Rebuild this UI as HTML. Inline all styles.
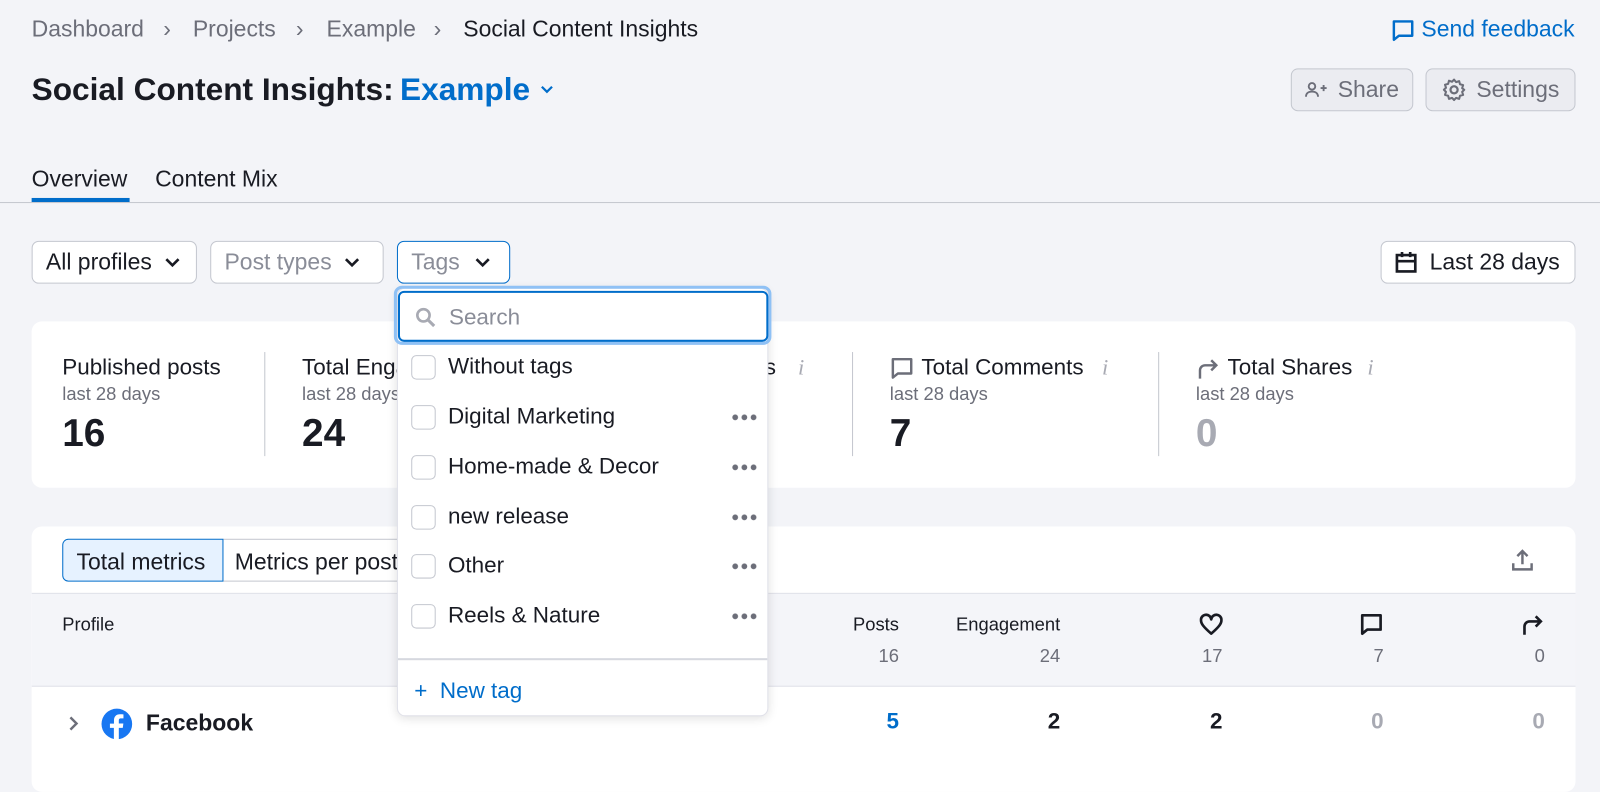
<!DOCTYPE html>
<html><head><meta charset="utf-8"><style>
*{box-sizing:border-box;margin:0;padding:0}
html,body{width:1600px;height:759px;overflow:hidden;background:#f3f4f8}
#w{position:absolute;left:0;top:0;width:1568px;height:744px;transform:scale(1.0204);transform-origin:0 0;font-family:"Liberation Sans",sans-serif;color:#191b23}
.a{position:absolute;white-space:nowrap}
.btn{position:absolute;border:1px solid #c4c7cf;border-radius:7px;background:#fff;font-size:22.5px;display:flex;align-items:center;padding:0 13px}
.gray{color:#6c6e79}
.card{position:absolute;background:#fff;border-radius:10px;left:31px;width:1513px}
.cb{position:absolute;left:13px;width:24px;height:24px;border:1.5px solid #c4c7cf;border-radius:5px}
.item{position:absolute;left:0;width:364px;height:49px;font-size:22px}
.item span{position:absolute;left:49px;top:11px}
.dots{position:absolute;right:12px;top:22px;width:26px;height:6px;background:radial-gradient(circle,#6c6e79 2.6px,transparent 3px) 0 0/9px 6px repeat-x}
.vl{position:absolute;top:345px;width:1px;height:102px;background:#c4c7cf}
.mt{font-size:22px}.ms{font-size:18px;color:#6c6e79}.mv{font-size:38px;font-weight:bold}
.f{font-size:22.5px}
.s{font-size:18px}
</style></head><body><div id="w">
<div class="a gray f" style="left:31px;top:16px">Dashboard</div>
<div class="a gray f" style="left:160px;top:16px">›</div>
<div class="a gray f" style="left:189px;top:16px">Projects</div>
<div class="a gray f" style="left:290px;top:16px">›</div>
<div class="a gray f" style="left:320px;top:16px">Example</div>
<div class="a gray f" style="left:425px;top:16px">›</div>
<div class="a f" style="left:454px;top:16px">Social Content Insights</div>
<svg class="a" style="left:1363px;top:18px" width="24" height="24" viewBox="0 0 24 24"><path d="M3 3h18v14H8l-5 4z" fill="none" stroke="#006dca" stroke-width="2.4" stroke-linejoin="round"/></svg>
<div class="a f" style="left:1393px;top:16px;color:#006dca">Send feedback</div>
<div class="a" style="left:31px;top:70px;font-size:31px;font-weight:bold">Social Content Insights:</div>
<div class="a" style="left:392px;top:70px;font-size:31px;font-weight:bold;color:#006dca">Example</div>
<svg class="a" style="left:528px;top:81px" width="16" height="14"><path d="M3 4l5 5 5-5" fill="none" stroke="#006dca" stroke-width="2.2"/></svg>
<div class="btn" style="left:1265px;top:67px;width:120px;height:42px;background:#ebecf1;color:#6c6e79;justify-content:center;gap:10px"><svg width="26" height="20" viewBox="0 0 26 20"><circle cx="8" cy="6" r="3.8" fill="none" stroke="#6c6e79" stroke-width="2.2"/><path d="M1 18c0-4 3-6 7-6s7 2 7 6" fill="none" stroke="#6c6e79" stroke-width="2.2"/><path d="M18 8h7M21.5 4.5v7" stroke="#6c6e79" stroke-width="2.2"/></svg>Share</div>
<div class="btn" style="left:1397px;top:67px;width:147px;height:42px;background:#ebecf1;color:#6c6e79;justify-content:center;gap:10px"><svg width="24" height="24" viewBox="0 0 24 24"><circle cx="12" cy="12" r="3.5" fill="none" stroke="#6c6e79" stroke-width="2.2"/><path d="M12 2l2 2.5 3-1 .8 3.1 3.1.8-1 3L22 12l-2.1 2 1 3-3.1.8-.8 3.1-3-1L12 22l-2-2.1-3 1-.8-3.1-3.1-.8 1-3L2 12l2.1-2-1-3 3.1-.8.8-3.1 3 1z" fill="none" stroke="#6c6e79" stroke-width="2" stroke-linejoin="round"/></svg>Settings</div>
<div class="a f" style="left:31px;top:163px">Overview</div>
<div class="a f" style="left:152px;top:163px">Content Mix</div>
<div class="a" style="left:31px;top:194px;width:96px;height:4px;background:#006dca"></div>
<div class="a" style="left:0;top:198px;width:1600px;height:1px;background:#c4c7cf"></div>
<div class="btn" style="left:31px;top:236px;width:162px;height:42px;gap:12px">All profiles<svg width="16" height="12"><path d="M2 3l6 6 6-6" fill="none" stroke="#191b23" stroke-width="2.6"/></svg></div>
<div class="btn" style="left:206px;top:236px;width:170px;height:42px;gap:12px;color:#8a8d98">Post types<svg width="16" height="12"><path d="M2 3l6 6 6-6" fill="none" stroke="#191b23" stroke-width="2.6"/></svg></div>
<div class="btn" style="left:389px;top:236px;width:111px;height:42px;gap:14px;color:#8a8d98;border-color:#006dca">Tags<svg width="16" height="12"><path d="M2 3l6 6 6-6" fill="none" stroke="#191b23" stroke-width="2.6"/></svg></div>
<div class="btn" style="left:1353px;top:236px;width:191px;height:42px;gap:12px"><svg width="22" height="24" viewBox="0 0 22 24"><rect x="2" y="5" width="18" height="16" fill="none" stroke="#191b23" stroke-width="2.6"/><path d="M2 11h18M7 2v5M15 2v5" stroke="#191b23" stroke-width="2.6"/></svg>Last 28 days</div>

<div class="card" style="top:315px;height:163px"></div>
<div class="a mt" style="left:61px;top:347px">Published posts</div><div class="a ms" style="left:61px;top:376px">last 28 days</div><div class="a mv" style="left:61px;top:404px">16</div>
<div class="vl" style="left:259px"></div>
<div class="a mt" style="left:296px;top:347px">Total Engagement</div><div class="a ms" style="left:296px;top:376px">last 28 days</div><div class="a mv" style="left:296px;top:404px">24</div>
<div class="a mt" style="left:610px;top:347px">Total Reactions</div>
<div class="a mt" style="left:782px;top:347px;color:#a8aab3;font-family:'Liberation Serif',serif;font-style:italic">i</div>
<div class="vl" style="left:835px"></div>
<svg class="a" style="left:872px;top:349px" width="24" height="24" viewBox="0 0 24 24"><path d="M3 3h18v14H8l-5 4z" fill="none" stroke="#6c6e79" stroke-width="2.4" stroke-linejoin="round"/></svg>
<div class="a mt" style="left:903px;top:347px">Total Comments</div>
<div class="a mt" style="left:1080px;top:347px;color:#a8aab3;font-family:'Liberation Serif',serif;font-style:italic">i</div>
<div class="a ms" style="left:872px;top:376px">last 28 days</div><div class="a mv" style="left:872px;top:404px">7</div>
<div class="vl" style="left:1135px"></div>
<svg class="a" style="left:1172px;top:349px" width="24" height="24" viewBox="0 0 24 24"><path d="M4 22V14a5 5 0 015-5h11M15 4l5 5-5 5" fill="none" stroke="#6c6e79" stroke-width="2.4"/></svg>
<div class="a mt" style="left:1203px;top:347px">Total Shares</div>
<div class="a mt" style="left:1340px;top:347px;color:#a8aab3;font-family:'Liberation Serif',serif;font-style:italic">i</div>
<div class="a ms" style="left:1172px;top:376px">last 28 days</div><div class="a mv" style="left:1172px;top:404px;color:#a8aab3">0</div>

<div class="card" style="top:516px;height:260px;overflow:hidden">
<div class="a" style="left:0;top:65px;width:1513px;height:92px;background:#f4f5f9;border-top:1px solid #e0e1e9;border-bottom:1px solid #e0e1e9"></div>
</div>
<div class="a f" style="left:61px;top:528px;width:158px;height:42px;border:1.5px solid #006dca;border-radius:6px 0 0 6px;background:#e6f2ff;padding:9px 0 0 13px">Total metrics</div>
<div class="a f" style="left:219px;top:528px;width:200px;height:42px;border:1px solid #c4c7cf;border-left:none;padding:9px 0 0 11px">Metrics per post</div>
<svg class="a" style="left:1480px;top:537px" width="24" height="24" viewBox="0 0 24 24"><path d="M12 16V3M7 8l5-5 5 5M3 15v6h18v-6" fill="none" stroke="#6c6e79" stroke-width="2.4"/></svg>
<div class="a s" style="left:61px;top:602px">Profile</div>
<div class="a s" style="left:781px;top:602px;width:100px;text-align:right">Posts</div>
<div class="a s" style="left:861px;top:602px;width:178px;text-align:right">Engagement</div>
<div class="a gray s" style="left:781px;top:633px;width:100px;text-align:right">16</div>
<div class="a gray s" style="left:881px;top:633px;width:158px;text-align:right">24</div>
<svg class="a" style="left:1174px;top:600px" width="26" height="24" viewBox="0 0 26 24"><path d="M13 21C5 14 3 11 3 8a5 5 0 0110-1 5 5 0 0110 1c0 3-2 6-10 13z" fill="none" stroke="#191b23" stroke-width="2.6" stroke-linejoin="round"/></svg>
<svg class="a" style="left:1332px;top:600px" width="24" height="24" viewBox="0 0 24 24"><path d="M3 3h18v14H8l-5 4z" fill="none" stroke="#191b23" stroke-width="2.6" stroke-linejoin="round"/></svg>
<svg class="a" style="left:1490px;top:600px" width="24" height="24" viewBox="0 0 24 24"><path d="M4 22V14a5 5 0 015-5h11M15 4l5 5-5 5" fill="none" stroke="#191b23" stroke-width="2.6"/></svg>
<div class="a gray s" style="left:1100px;top:633px;width:98px;text-align:right">17</div>
<div class="a gray s" style="left:1256px;top:633px;width:100px;text-align:right">7</div>
<div class="a gray s" style="left:1414px;top:633px;width:100px;text-align:right">0</div>
<svg class="a" style="left:65px;top:700px" width="14" height="18"><path d="M4 3l6 6-6 6" fill="none" stroke="#6c6e79" stroke-width="2.4"/></svg>
<svg class="a" style="left:99px;top:694px" width="31" height="31" viewBox="0 0 32 32"><circle cx="16" cy="16" r="15.5" fill="#1877f2"/><path d="M18 32V20h4l.6-4.5H18v-3c0-1.3.4-2.2 2.2-2.2h2.5V6.3c-.4-.1-1.9-.2-3.6-.2-3.6 0-6 2.2-6 6.2v3.3H9V20h4v12z" fill="#fff"/></svg>
<div class="a" style="left:143px;top:696px;font-size:22.5px;font-weight:bold">Facebook</div>
<div class="a" style="left:781px;top:694px;width:100px;text-align:right;font-size:22px;font-weight:bold;color:#006dca">5</div>
<div class="a" style="left:881px;top:694px;width:158px;text-align:right;font-size:22px;font-weight:bold">2</div>
<div class="a" style="left:1100px;top:694px;width:98px;text-align:right;font-size:22px;font-weight:bold">2</div>
<div class="a" style="left:1256px;top:694px;width:100px;text-align:right;font-size:22px;font-weight:bold;color:#a8aab3">0</div>
<div class="a" style="left:1414px;top:694px;width:100px;text-align:right;font-size:22px;font-weight:bold;color:#a8aab3">0</div>

<div class="a" style="left:389px;top:282px;width:364px;height:420px;background:#fff;border:1px solid #e0e1e9;border-radius:8px;box-shadow:0 2px 10px rgba(0,0,0,.12)">
<div class="a" style="left:-4px;top:-3px;width:370px;height:58px;border:3px solid #8fc1f5;border-radius:8px"></div>
<div class="a" style="left:0;top:2px;width:363px;height:50px;border:2px solid #006dca;border-radius:6px;background:#fff"></div>
<svg class="a" style="left:15px;top:16px" width="24" height="24" viewBox="0 0 24 24"><circle cx="10" cy="10" r="6" fill="none" stroke="#a8aab3" stroke-width="2.6"/><path d="M14.5 14.5l6 6" stroke="#a8aab3" stroke-width="3"/></svg>
<div class="a" style="left:50px;top:15px;font-size:22px;color:#8a8d98">Search</div>
<div class="item" style="top:52px"><div class="cb" style="top:13px"></div><span>Without tags</span></div>
<div class="item" style="top:101px"><div class="cb" style="top:13px"></div><span>Digital Marketing</span><div class="dots"></div></div>
<div class="item" style="top:150px"><div class="cb" style="top:13px"></div><span>Home-made &amp; Decor</span><div class="dots"></div></div>
<div class="item" style="top:199px"><div class="cb" style="top:13px"></div><span>new release</span><div class="dots"></div></div>
<div class="item" style="top:247px"><div class="cb" style="top:13px"></div><span>Other</span><div class="dots"></div></div>
<div class="item" style="top:296px"><div class="cb" style="top:13px"></div><span>Reels &amp; Nature</span><div class="dots"></div></div>
<div class="a" style="left:0;top:362px;width:362px;height:2px;background:#d6d8df"></div>
<div class="a" style="left:16px;top:381px;font-size:22px;color:#006dca">+&nbsp; New tag</div>
</div>
</div></body></html>
